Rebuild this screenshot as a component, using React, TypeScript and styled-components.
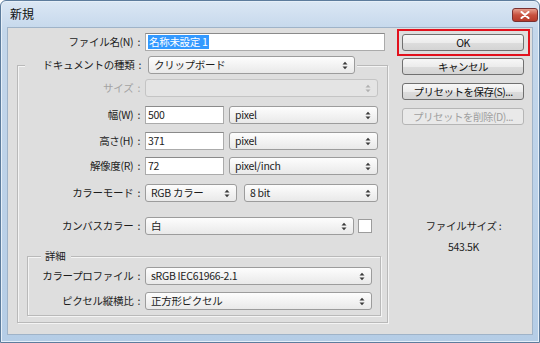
import React from 'react';
import styled, { createGlobalStyle } from 'styled-components';

const GlobalStyle = createGlobalStyle`
  html, body { margin: 0; padding: 0; background: #ffffff; }
  body {
    font-family: "Noto Sans CJK JP", "Noto Sans", sans-serif;
    font-size: 10.5px;
    letter-spacing: -0.3px;
    color: #1c1c1c;
  }
`;

const Window = styled.div`
  width: 540px; height: 343px;
  box-sizing: border-box;
  display: flex;
  flex-direction: column;
  padding: 0 6px 7px 6px;
  border: 1px solid #5d7c9c;
  border-radius: 6px 6px 0 0;
  background: linear-gradient(#dbe7f4, #c4d7eb 30px, #b5cde6);
  box-shadow: inset 0 0 0 1px #e6eff8;
`;

const TitleBar = styled.div`
  height: 26px;
  display: flex;
  justify-content: space-between;
  align-items: flex-start;
  padding-left: 3px;
`;

const Title = styled.div`
  font-size: 12px;
  letter-spacing: 0;
  line-height: 14px;
  margin-top: 6px;
  color: #101010;
`;

const CloseButton = styled.div`
  width: 26px; height: 14px;
  box-sizing: border-box;
  margin-top: 7px;
  margin-right: -5px;
  border: 1px solid #7a3030;
  border-radius: 3px;
  background: linear-gradient(#e8a08f, #c8513f 50%, #b63a2a);
  display: flex;
  align-items: center;
  justify-content: center;
`;

const Body = styled.div`
  flex: 1;
  display: flex;
  padding-top: 1px;
  background: #dedede;
  border: 1px solid #9fb3c8;
`;

const LeftPane = styled.div`
  width: 383px;
  padding-top: 4px;
  display: flex;
  flex-direction: column;
`;

const RightPane = styled.div`
  width: 133px;
  margin-left: 6px;
  display: flex;
  flex-direction: column;
`;

const Row = styled.div<{ $top?: number }>`
  display: flex;
  align-items: center;
  height: 18px;
  margin-top: ${({ $top }) => $top ?? 0}px;
`;

const Label = styled.div<{ $w: number; $gap?: number; $disabled?: boolean }>`
  width: ${({ $w }) => $w}px;
  flex-shrink: 0;
  margin-right: ${({ $gap }) => $gap ?? 5}px;
  text-align: right;
  white-space: nowrap;
  line-height: 14px;
  color: ${({ $disabled }) => ($disabled ? '#a3a3a3' : '#1c1c1c')};

  &::after {
    content: ':';
    margin-left: 4px;
  }
`;

const TextInput = styled.div<{ $w: number }>`
  width: ${({ $w }) => $w}px;
  height: 18px;
  box-sizing: border-box;
  flex-shrink: 0;
  background: #ffffff;
  border: 1px solid #ababab;
  border-top-color: #8a8a8a;
  padding-left: 2px;
  display: flex;
  align-items: center;
  line-height: 14px;
`;

const Selected = styled.span`
  background: #3399ff;
  color: #ffffff;
  padding: 0 1px;
`;

const SelectBox = styled.div<{ $w: number; $gap?: number; $disabled?: boolean }>`
  width: ${({ $w }) => $w}px;
  height: 18px;
  box-sizing: border-box;
  flex-shrink: 0;
  margin-left: ${({ $gap }) => $gap ?? 0}px;
  border: 1px solid ${({ $disabled }) => ($disabled ? '#c4c4c4' : '#9c9c9c')};
  border-radius: 3px;
  background: ${({ $disabled }) =>
    $disabled ? '#e4e4e4' : 'linear-gradient(#fdfdfd, #f1f1f1 60%, #e9e9e9)'};
  display: flex;
  align-items: center;
  justify-content: space-between;
  padding: 0 6px 0 5px;
  line-height: 14px;
  white-space: nowrap;
`;

const Swatch = styled.div`
  width: 14px; height: 14px;
  box-sizing: border-box;
  margin-left: 4px;
  background: #ffffff;
  border: 1px solid #9c9c9c;
`;

const Group = styled.div<{ $left: number; $w: number; $top: number }>`
  width: ${({ $w }) => $w}px;
  box-sizing: border-box;
  margin-left: ${({ $left }) => $left}px;
  margin-top: ${({ $top }) => $top}px;
  border: 1px solid #b9b9b9;
  box-shadow: inset 1px 1px 0 #f4f4f4, 1px 1px 0 #f4f4f4;
  display: flex;
  flex-direction: column;
`;

const GroupHeader = styled.div<{ $left: number; $lift: number }>`
  align-self: flex-start;
  display: flex;
  align-items: center;
  margin-top: ${({ $lift }) => -$lift}px;
  margin-left: ${({ $left }) => $left}px;
  background: #dedede;
  padding-right: 2px;
`;

const GroupTitle = styled.div`
  line-height: 14px;
  padding: 0 4px;
`;

const Spacer = styled.div<{ $h: number }>`
  height: ${({ $h }) => $h}px;
`;

const OkFrame = styled.div`
  width: 133px;
  box-sizing: border-box;
  border: 2px solid #e2111d;
  padding: 3px 4px 3px 3px;
`;

const Button = styled.div<{ $top?: number; $disabled?: boolean }>`
  width: 122px; height: 17px;
  box-sizing: border-box;
  margin-top: ${({ $top }) => $top ?? 0}px;
  margin-left: ${({ $top }) => ($top === undefined ? 0 : 5)}px;
  border: 1px solid ${({ $disabled }) => ($disabled ? '#b5b5b5' : '#707070')};
  border-radius: 3px;
  background: ${({ $disabled }) =>
    $disabled ? '#e9e9e9' : 'linear-gradient(#f7f7f7, #ececec 50%, #dddddd 51%, #d4d4d4)'};
  display: flex;
  align-items: center;
  justify-content: center;
  line-height: 14px;
  letter-spacing: -0.5px;
  white-space: nowrap;
  color: ${({ $disabled }) => ($disabled ? '#a0a0a0' : '#111111')};
`;

const FileSize = styled.div`
  margin-top: 94px;
  display: flex;
  flex-direction: column;
  align-items: center;
  gap: 7px;
  line-height: 14px;
`;

const Arrows = ({ disabled }: { disabled?: boolean }) => (
  <svg width="6" height="9" viewBox="0 0 6 9">
    <polygon points="0.5,3.5 3,0.8 5.5,3.5" fill={disabled ? '#b0b0b0' : '#3a3a3a'} />
    <polygon points="0.5,5.5 3,8.2 5.5,5.5" fill={disabled ? '#b0b0b0' : '#3a3a3a'} />
  </svg>
);

const Select = (props: { w: number; gap?: number; disabled?: boolean; children?: React.ReactNode }) => (
  <SelectBox $w={props.w} $gap={props.gap} $disabled={props.disabled}>
    <span>{props.children}</span>
    <Arrows disabled={props.disabled} />
  </SelectBox>
);

export default function App() {
  return (
    <>
      <GlobalStyle />
      <Window>
        <TitleBar>
          <Title>新規</Title>
          <CloseButton>
            <svg width="10" height="8" viewBox="0 0 10 8">
              <path d="M1.5 1 L8.5 7 M8.5 1 L1.5 7" stroke="#ffffff" strokeWidth="2" strokeLinecap="round" />
            </svg>
          </CloseButton>
        </TitleBar>
        <Body>
          <LeftPane>
            <Row>
              <Label $w={132}>ファイル名(N)</Label>
              <TextInput $w={240}>
                <Selected>名称未設定 1</Selected>
              </TextInput>
            </Row>

            <Group $left={9} $w={371} $top={14}>
              <GroupHeader $left={7} $lift={10}>
                <Label $w={116} $gap={7}>ドキュメントの種類</Label>
                <Select w={207}>クリップボード</Select>
              </GroupHeader>

              <Row $top={5}>
                <Label $w={122} $disabled>サイズ</Label>
                <Select w={233} disabled />
              </Row>
              <Row $top={9}>
                <Label $w={122}>幅(W)</Label>
                <TextInput $w={79}>500</TextInput>
                <Select w={149} gap={5}>pixel</Select>
              </Row>
              <Row $top={8}>
                <Label $w={122}>高さ(H)</Label>
                <TextInput $w={79}>371</TextInput>
                <Select w={149} gap={5}>pixel</Select>
              </Row>
              <Row $top={7}>
                <Label $w={122}>解像度(R)</Label>
                <TextInput $w={79}>72</TextInput>
                <Select w={149} gap={5}>pixel/inch</Select>
              </Row>
              <Row $top={9}>
                <Label $w={122}>カラーモード</Label>
                <Select w={92}>RGB カラー</Select>
                <Select w={134} gap={7}>8 bit</Select>
              </Row>
              <Row $top={15}>
                <Label $w={122}>カンバスカラー</Label>
                <Select w={209}>白</Select>
                <Swatch />
              </Row>

              <Group $left={9} $w={354} $top={21}>
                <GroupHeader $left={13} $lift={8}>
                  <GroupTitle>詳細</GroupTitle>
                </GroupHeader>
                <Row $top={4}>
                  <Label $w={112}>カラープロファイル</Label>
                  <Select w={227}>sRGB IEC61966-2.1</Select>
                </Row>
                <Row $top={7}>
                  <Label $w={112}>ピクセル縦横比</Label>
                  <Select w={227}>正方形ピクセル</Select>
                </Row>
                <Spacer $h={5} />
              </Group>
              <Spacer $h={6} />
            </Group>
          </LeftPane>

          <RightPane>
            <OkFrame>
              <Button>OK</Button>
            </OkFrame>
            <Button $top={2}>キャンセル</Button>
            <Button $top={8}>プリセットを保存(S)...</Button>
            <Button $top={8} $disabled>プリセットを削除(D)...</Button>
            <FileSize>
              <div>ファイルサイズ :</div>
              <div>543.5K</div>
            </FileSize>
          </RightPane>
        </Body>
      </Window>
    </>
  );
}
